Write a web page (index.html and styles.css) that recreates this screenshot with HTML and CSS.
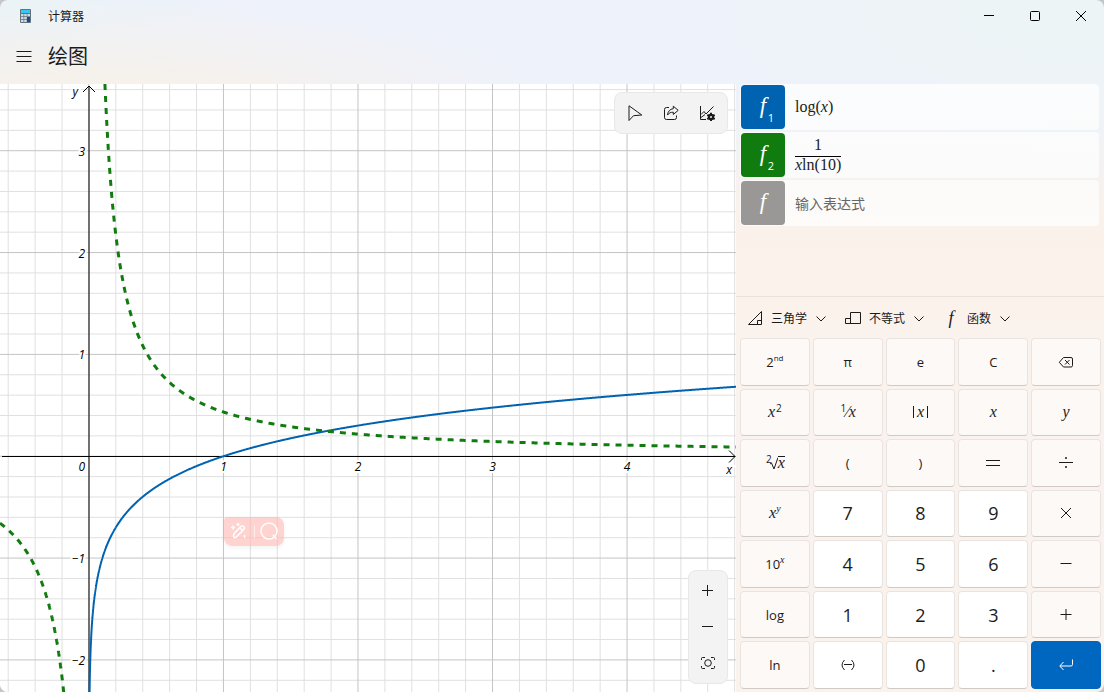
FILE: index.html
```html
<!DOCTYPE html>
<html lang="zh-CN">
<head>
    <meta charset="UTF-8">
    <meta name="viewport" content="width=device-width, initial-scale=1">
    <title>计算器</title>
    <link rel="stylesheet" href="styles.css">
</head>
<body>
<div class="window">
    <!-- Title bar -->
    <header class="titlebar">
        <svg class="app-icon" width="12" height="16" viewBox="0 0 12 16">
            <rect x="0" y="1" width="11" height="14" rx="1" fill="#65727d"/>
            <rect x="1" y="2" width="9" height="3" fill="#35c8f5"/>
            <path d="M1 6h2.500v2.300H1zM4.200 6h2.500v2.300H4.200zM7.400 6h2.600v2.300H7.400zM1 9h2.500v2.300H1zM4.200 9h2.500v2.300H4.200zM1 12h2.500v2H1zM4.200 12h2.500v2H4.200z" fill="#d3dbe2"/>
            <rect x="7" y="9" width="3" height="5" fill="#134a9c"/>
        </svg>
        <span class="app-name">计算器</span>
        <div class="window-buttons">
            <button aria-label="最小化"><svg width="12" height="12" viewBox="0 0 12 12"><path d="M1 5.500h10"/></svg></button>
            <button aria-label="最大化"><svg width="12" height="12" viewBox="0 0 12 12"><rect x="1.500" y="1.500" width="9" height="9" rx="1"/></svg></button>
            <button aria-label="关闭"><svg width="12" height="12" viewBox="0 0 12 12"><path d="M1 1l10 10M11 1L1 11"/></svg></button>
        </div>
    </header>

    <div class="nav">
        <button class="menu-btn" aria-label="菜单"><svg width="16" height="16" viewBox="0 0 16 16"><path d="M0.500 2.500h15M0.500 7.500h15M0.500 12.500h15"/></svg></button>
        <h1>绘图</h1>
    </div>

    <main class="content">
        <!-- Graph -->
        <section class="graph">
            <svg id="plot" class="plot"></svg>

            <div class="toolbar toolbar-top">
                <button aria-label="跟踪"><svg width="16" height="16" viewBox="0 0 16 16"><path d="M2 0.800v14.700l4.500-4.800 8.300-0.700z"/></svg></button>
                <button aria-label="共享"><svg width="16" height="16" viewBox="0 0 16 16"><path d="M6 2.500H3.500a2 2 0 0 0-2 2v8a2 2 0 0 0 2 2h8a2 2 0 0 0 2-2V10.500"/><path d="M10.300 1.200l4.900 4.100-4.900 4.200V7.200C7.500 7.200 5.800 8.200 4.500 10 4.900 6.400 7 4 10.300 3.700z"/></svg></button>
                <button aria-label="图形选项"><svg width="16" height="16" viewBox="0 0 16 16"><path d="M1.500 1v13.500H7M2 9.500L5 6.500l2 2.500 7.500-7.500M2 12.500l4-3"/><circle cx="12" cy="12" r="2.100" stroke-width="2.200"/><path d="M12 7.700v2M12 14.300v2M8.300 9.900l1.700 1M14 13.100l1.700 1M8.300 14.100l1.700-1M14 10.900l1.700-1" stroke-width="2"/></svg></button>
            </div>

            <div class="toolbar toolbar-zoom">
                <button aria-label="放大"><svg width="16" height="16" viewBox="0 0 16 16"><path d="M2 7.500h11M7.500 2v11"/></svg></button>
                <button aria-label="缩小"><svg width="16" height="16" viewBox="0 0 16 16"><path d="M2 7.500h11"/></svg></button>
                <button aria-label="自动调整"><svg width="16" height="16" viewBox="0 0 16 16"><circle cx="8" cy="8" r="3.300"/><path d="M1.500 5V3.500a1 1 0 0 1 1-1H5M11 2.500h2.500a1 1 0 0 1 1 1V5M14.500 11v1.500a1 1 0 0 1-1 1H11M5 13.500H2.500a1 1 0 0 1-1-1V11"/></svg></button>
            </div>

            <div class="float-tip">
                <button aria-label="编辑"><svg width="18" height="18" viewBox="0 0 18 18"><path d="M4 15.500c-1-1-.3-3.500.8-4.800l6-6.200a2 2 0 0 1 2.900 0 2 2 0 0 1 0 2.900l-6 6.300c-1.200 1.100-2.700 2.600-3.700 1.800zM10 6l2.800 2.800"/><path d="M3 3.500v4M1 5.500h4M8 1v3M6.500 2.500h3M14.500 13v3"/></svg></button>
                <button aria-label="搜索"><svg width="20" height="20" viewBox="0 0 20 20"><circle cx="10" cy="10" r="8"/><path d="M14 14l3.500 4"/></svg></button>
            </div>
        </section>

        <!-- Equations and keypad -->
        <aside class="panel">
            <div class="equations">
                <div class="equation">
                    <button class="badge blue"><i>f</i><sub>1</sub></button>
                    <div class="math">log(<i>x</i>)</div>
                </div>
                <div class="equation">
                    <button class="badge green"><i>f</i><sub>2</sub></button>
                    <div class="math fraction">
                        <span class="numerator">1</span>
                        <span class="denominator"><i>x</i>ln(10)</span>
                    </div>
                </div>
                <div class="equation">
                    <button class="badge gray"><i>f</i></button>
                    <input type="text" placeholder="输入表达式" aria-label="输入表达式">
                </div>
            </div>

            <div class="input-area">
                <div class="menus">
                    <button>
                        <svg width="16" height="16" viewBox="0 0 16 16"><path d="M1.500 14.500h13V1.500zM10.500 14.500v-4h4"/></svg>
                        三角学
                        <svg width="12" height="12" viewBox="0 0 12 12"><path d="M1.500 4.500L6 9l4.500-4.500"/></svg>
                    </button>
                    <button>
                        <svg width="16" height="16" viewBox="0 0 16 16"><path d="M5.500 2.500h10v11h-10zM0.500 8.500h5v5h-5z"/></svg>
                        不等式
                        <svg width="12" height="12" viewBox="0 0 12 12"><path d="M1.500 4.500L6 9l4.500-4.500"/></svg>
                    </button>
                    <button>
                        <span class="func-icon">f</span>
                        函数
                        <svg width="12" height="12" viewBox="0 0 12 12"><path d="M1.500 4.500L6 9l4.500-4.500"/></svg>
                    </button>
                </div>

                <div class="keypad">
                    <button>2<sup>nd</sup></button>
                    <button>π</button>
                    <button>e</button>
                    <button>C</button>
                    <button aria-label="退格"><svg width="16" height="16" viewBox="0 0 16 16"><path d="M5.500 3.500h7.500a1.500 1.500 0 0 1 1.500 1.500v6.500a1.500 1.500 0 0 1-1.500 1.500H5.500L1.300 8.300zM7 6l4.500 4.500M11.500 6L7 10.500"/></svg></button>

                    <button class="serif"><i>x</i><sup class="num">2</sup></button>
                    <button class="serif"><sup class="num">1</sup>⁄<i>x</i></button>
                    <button class="serif"><i class="abs">x</i></button>
                    <button class="serif"><i>x</i></button>
                    <button class="serif"><i>y</i></button>

                    <button class="serif root"><sup class="num">2</sup><svg width="8" height="14" viewBox="0 0 8 14"><path d="M0 8l1.500-1L4 13 8 1.500"/></svg><i>x</i></button>
                    <button>(</button>
                    <button>)</button>
                    <button aria-label="等于"><svg width="16" height="16" viewBox="0 0 16 16"><path d="M1 5.500h14M1 10.500h14"/></svg></button>
                    <button aria-label="除以"><svg width="16" height="16" viewBox="0 0 16 16"><path d="M1 7.500h14"/><path d="M7.500 2.500h1v1h-1zM7.500 11.500h1v1h-1z"/></svg></button>

                    <button class="serif"><i>x</i><sup><i>y</i></sup></button>
                    <button class="digit">7</button>
                    <button class="digit">8</button>
                    <button class="digit">9</button>
                    <button aria-label="乘以"><svg width="16" height="16" viewBox="0 0 16 16"><path d="M3 3l10 10M13 3L3 13"/></svg></button>

                    <button>10<sup class="power"><i>x</i></sup></button>
                    <button class="digit">4</button>
                    <button class="digit">5</button>
                    <button class="digit">6</button>
                    <button aria-label="减"><svg width="16" height="16" viewBox="0 0 16 16"><path d="M2.500 7.500h11"/></svg></button>

                    <button>log</button>
                    <button class="digit">1</button>
                    <button class="digit">2</button>
                    <button class="digit">3</button>
                    <button aria-label="加"><svg width="16" height="16" viewBox="0 0 16 16"><path d="M2.500 7.500h11M8 2v11"/></svg></button>

                    <button>ln</button>
                    <button class="digit" aria-label="正负"><svg width="16" height="16" viewBox="0 0 16 16"><path d="M4.500 3Q-0.500 8 4.500 13M11.500 3Q16.500 8 11.500 13M4 7.500h8"/></svg></button>
                    <button class="digit">0</button>
                    <button class="digit">.</button>
                    <button class="enter" aria-label="确定"><svg width="16" height="16" viewBox="0 0 16 16"><path d="M14.500 2.500v5a1.500 1.500 0 0 1-1.500 1.500H2M5.500 5L1.800 9l3.700 4"/></svg></button>
                </div>
            </div>
        </aside>
    </main>
</div>
<script src="graph.js"></script>
</body>
</html>
```
FILE: styles.css
```css
* {
    box-sizing: border-box;
}
html {
    background: #c4c6c8;
}
body {
    margin: 0;
    font-family: "Open Sans", "Noto Sans CJK SC", sans-serif;
    font-size: 12px;
    color: #1b1b1b;
}
button {
    display: flex;
    align-items: center;
    justify-content: center;
    padding: 0;
    border: none;
    background: none;
    color: inherit;
    font: inherit;
}
svg {
    fill: none;
    stroke: #1b1b1b;
}
sub, sup {
    line-height: 1;
}
.window {
    display: flex;
    flex-direction: column;
    height: 100vh;
    min-height: 560px;
    border-radius: 8px;
    overflow: hidden;
    background:
        radial-gradient(ellipse 40% 14% at 10% 14%, #f8f1e8, rgba(248, 241, 232, 0)),
        radial-gradient(ellipse 40% 26% at 100% 0, #edf4f6 30%, rgba(237, 244, 246, 0)),
        radial-gradient(ellipse 22% 20% at 0 0, #eaf3f6, rgba(234, 243, 246, 0)),
        linear-gradient(#eef2fb 12%, #eff3f8 16%, #faf1ea 32%, #fbf2ec 45%, #f9f2ef 70%, #fbf2ec);
}

/* Title bar */
.titlebar {
    display: flex;
    align-items: center;
    height: 32px;
    padding-left: 20px;
}
.app-icon {
    stroke: none;
}
.app-name {
    margin-left: 16px;
}
.window-buttons {
    display: flex;
    margin-left: auto;
}
.window-buttons button {
    width: 46px;
    height: 32px;
}
.window-buttons svg {
    stroke: #000;
}
.nav {
    display: flex;
    align-items: center;
    height: 52px;
    padding-bottom: 3px;
}
.menu-btn {
    width: 48px;
    height: 40px;
}
.nav h1 {
    margin: 0;
    font-size: 20px;
    font-weight: 400;
    line-height: 28px;
}

/* Graph */
.content {
    display: grid;
    grid-template-columns: 2fr 1fr;
    flex: 1;
    min-height: 0;
}
.graph {
    position: relative;
    min-width: 0;
    background: #fff;
    overflow: hidden;
}
.plot {
    display: block;
    width: 100%;
    height: 100%;
}
.plot .minor {
    stroke: #e0e0e0;
}
.plot .major {
    stroke: #c4c4c4;
}
.plot .axis {
    stroke: #000;
}
.plot .curve {
    stroke: #0063b1;
    stroke-width: 2;
}
.plot .dashed {
    stroke: #107c10;
    stroke-width: 3;
    stroke-dasharray: 6 6;
}
.plot text {
    fill: #000;
    stroke: #fff;
    stroke-width: 4px;
    paint-order: stroke;
    font-size: 12px;
    font-style: italic;
}
.toolbar {
    position: absolute;
    right: 8px;
    display: flex;
    padding: 2px;
    border: 1px solid #e8e8e8;
    border-radius: 8px;
    background: #f3f3f3;
}
.toolbar button {
    width: 36px;
    height: 36px;
}
.toolbar-top {
    top: 8px;
}
.toolbar-zoom {
    bottom: 8px;
    flex-direction: column;
}
.toolbar-zoom button {
    width: 34px;
}
.float-tip {
    position: absolute;
    left: 30.5%;
    top: 71.2%;
    display: flex;
    align-items: center;
    border-radius: 4px 8px 8px 8px;
    background: rgba(255, 182, 176, 0.6);
    box-shadow: 0 2px 4px rgba(0, 0, 0, 0.05);
}
.float-tip button {
    width: 30px;
    height: 29px;
}
.float-tip button + button::before {
    content: "";
    position: absolute;
    left: 30px;
    width: 1px;
    height: 13px;
    background: #fff;
    opacity: 0.6;
}
.float-tip svg {
    stroke: #fff;
    stroke-width: 1.5;
}

/* Equations */
.panel {
    display: grid;
    grid-template-rows: 212fr 396fr;
    min-width: 0;
    min-height: 0;
}
.equations {
    display: flex;
    flex-direction: column;
    gap: 2px;
    padding: 0 5px 0 4px;
}
.equation {
    display: flex;
    align-items: center;
    min-height: 46px;
    padding: 1px;
    border-radius: 4px;
    background: rgba(255, 255, 255, 0.7);
}
.badge {
    position: relative;
    width: 44px;
    height: 44px;
    padding-bottom: 2px;
    border-radius: 4px;
    color: #fff;
    font-family: "Liberation Serif", serif;
    font-size: 23px;
}
.badge sub {
    position: absolute;
    right: 11px;
    bottom: 6px;
    font-family: "Open Sans", sans-serif;
    font-size: 11px;
}
.blue {
    background: #0063b1;
}
.green {
    background: #107c10;
}
.gray {
    background: #999896;
}
.math {
    margin-left: 10px;
    font-family: "Liberation Serif", serif;
    font-size: 16px;
}
.fraction {
    display: flex;
    flex-direction: column;
    align-items: center;
}
.numerator {
    line-height: 22px;
}
.denominator {
    padding-bottom: 4px;
    border-top: 1px solid #000;
    line-height: 16px;
}
.equation input {
    flex: 1;
    min-width: 0;
    margin-left: 10px;
    padding: 0;
    border: none;
    outline: none;
    background: none;
    font: inherit;
    font-size: 14px;
}
.equation input::placeholder {
    color: #666;
}

/* Keypad */
.input-area {
    display: flex;
    flex-direction: column;
    min-height: 0;
    border-top: 1px solid #e9e3e0;
}
.menus {
    display: flex;
    gap: 2px;
    height: 41px;
    padding-left: 3px;
}
.menus button {
    gap: 8px;
    padding: 0 8px;
}
.func-icon {
    width: 16px;
    text-align: center;
    font-family: "Liberation Serif", serif;
    font-size: 18px;
    font-style: italic;
    line-height: 20px;
}
.keypad {
    display: grid;
    grid-template-columns: repeat(5, 1fr);
    grid-template-rows: repeat(7, 1fr);
    gap: 3px;
    flex: 1;
    min-height: 0;
    padding: 0 3px 3px 4px;
}
.keypad button {
    border: 1px solid #eae4e1;
    border-bottom-color: #d0cac7;
    border-radius: 4px;
    background: #fdf9f7;
    font-size: 13px;
}
.keypad .digit {
    background: #fff;
    font-size: 18px;
}
.keypad .serif {
    font-family: "Liberation Serif", serif;
    font-size: 16px;
}
.keypad sup {
    align-self: center;
    padding-bottom: 8px;
    font-size: 8px;
}
.keypad .serif sup,
.keypad .power {
    font-size: 10px;
}
.power {
    font-family: "Liberation Serif", serif;
}
.num {
    padding-left: 1px;
    font-family: "Open Sans", sans-serif;
}
.abs {
    padding: 0 3px;
    border: solid #1b1b1b;
    border-width: 0 1px;
    line-height: 12px;
}
.root i {
    border-top: 1px solid #1b1b1b;
    line-height: 12px;
}
.root svg {
    margin-left: -2px;
}
.keypad .enter {
    border-color: #0067c0;
    background: #0067c0;
}
.enter svg {
    stroke: #fff;
}
```
FILE: graph.js
```js
const plot = document.getElementById('plot');
const view = { xMin: -0.661, xMax: 4.81, yMin: -2.315, yMax: 3.655 };

// Build the path of a function over [from, to]
function curvePath(fn, from, to, toX, toY) {
    const points = [];
    const steps = 1200;
    for (let i = 0; i <= steps; i++) {
        const x = from + (to - from) * i / steps;
        const y = fn(x);
        if (isFinite(y) && y > view.yMin - 1 && y < view.yMax + 1) {
            points.push(toX(x).toFixed(2) + ' ' + toY(y).toFixed(2));
        }
    }
    return 'M' + points.join('L');
}

function drawGraph() {
    const width = plot.clientWidth;
    const height = plot.clientHeight;
    const toX = x => (x - view.xMin) / (view.xMax - view.xMin) * width;
    const toY = y => (view.yMax - y) / (view.yMax - view.yMin) * height;
    const x0 = Math.round(toX(0));
    const y0 = Math.round(toY(0)) + 0.5;
    let minor = '';
    let major = '';
    let labels = `<text x="${x0 - 4}" y="${y0 + 14}" text-anchor="end">0</text>`;

    // Grid, five cells to a unit
    for (let i = Math.ceil(view.xMin * 5); i <= view.xMax * 5; i++) {
        const line = `M${toX(i / 5)} 0V${height}`;
        if (i % 5) minor += line; else major += line;
        if (i > 0 && i % 5 === 0) {
            labels += `<text x="${toX(i / 5)}" y="${y0 + 14}" text-anchor="middle">${i / 5}</text>`;
        }
    }
    for (let i = Math.ceil(view.yMin * 5); i <= view.yMax * 5; i++) {
        const line = `M0 ${toY(i / 5)}H${width}`;
        if (i % 5) minor += line; else major += line;
        if (i !== 0 && i % 5 === 0) {
            const label = String(i / 5).replace('-', '−');
            labels += `<text x="${x0 - 4}" y="${toY(i / 5) + 5}" text-anchor="end">${label}</text>`;
        }
    }

    const inverse = x => 1 / (x * Math.LN10);
    plot.innerHTML = `
        <path class="minor" d="${minor}"/>
        <path class="major" d="${major}"/>
        ${labels}
        <text x="${x0 - 11}" y="12" text-anchor="end">y</text>
        <text x="${width - 4}" y="${y0 + 17}" text-anchor="end">x</text>
        <path class="axis" d="M2 ${y0}H${width - 1}m-6 -6l6 6l-6 6M${x0} ${height}V2m-6 6l6 -6l6 6"/>
        <path class="curve" d="${curvePath(Math.log10, 0.003, 0.2, toX, toY)}"/>
        <path class="curve" d="${curvePath(Math.log10, 0.2, view.xMax, toX, toY)}"/>
        <path class="dashed" d="${curvePath(inverse, view.xMin, -0.1, toX, toY)}"/>
        <path class="dashed" d="${curvePath(inverse, 1 / (view.yMax * Math.LN10), view.xMax, toX, toY)}"/>`;
}

drawGraph();
window.addEventListener('resize', drawGraph);
```
